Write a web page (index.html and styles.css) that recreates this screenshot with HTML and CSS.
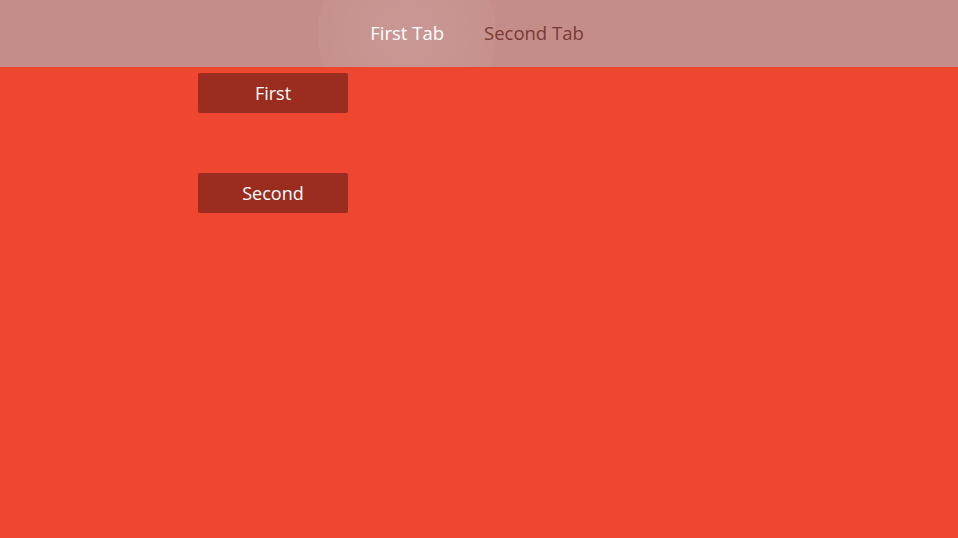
FILE: index.html
```html
<!DOCTYPE html>
<html>
<head>
<meta charset="utf-8">
<link rel="stylesheet" href="styles.css">
</head>
<body>
<header class="tabbar">
  <nav class="tabs">
    <div class="tab active">First Tab</div>
    <div class="tab">Second Tab</div>
  </nav>
</header>
<main class="content">
  <button class="btn">First</button>
  <button class="btn">Second</button>
</main>
</body>
</html>
```
FILE: styles.css
```css
html, body {
  margin: 0;
  padding: 0;
  height: 100%;
}
body {
  background: #ee4630;
  font-family: "Open Sans", "Liberation Sans", sans-serif;
  overflow: hidden;
}
.tabbar {
  height: 67px;
  background: #c48d89;
  display: flex;
  justify-content: center;
  align-items: center;
  overflow: hidden;
}
.tabs {
  display: flex;
  gap: 40px;
  align-items: center;
  margin-left: -4px;
  margin-top: -2px;
}
.tab {
  font-size: 18.5px;
  color: #7b3a36;
  position: relative;
  z-index: 0;
}
.tab.active {
  color: #ffffff;
}
.tab.active::before {
  content: "";
  position: absolute;
  left: 50%;
  top: 50%;
  width: 178px;
  height: 178px;
  margin-left: -89px;
  margin-top: -89px;
  border-radius: 50%;
  background: radial-gradient(circle, rgba(255,255,255,0.09) 0%, rgba(255,255,255,0.07) 35%, rgba(255,255,255,0.04) 70%, rgba(255,255,255,0.015) 100%);
  z-index: -1;
  pointer-events: none;
}
.content {
  display: flex;
  flex-direction: column;
  align-items: flex-start;
  gap: 60px;
  padding: 6px 0 0 198px;
}
.btn {
  width: 150px;
  height: 40px;
  border: none;
  border-radius: 2px;
  background: #9a2c20;
  color: #ffffff;
  font-family: "Open Sans", "Liberation Sans", sans-serif;
  font-size: 18px;
  padding: 0;
}
```
